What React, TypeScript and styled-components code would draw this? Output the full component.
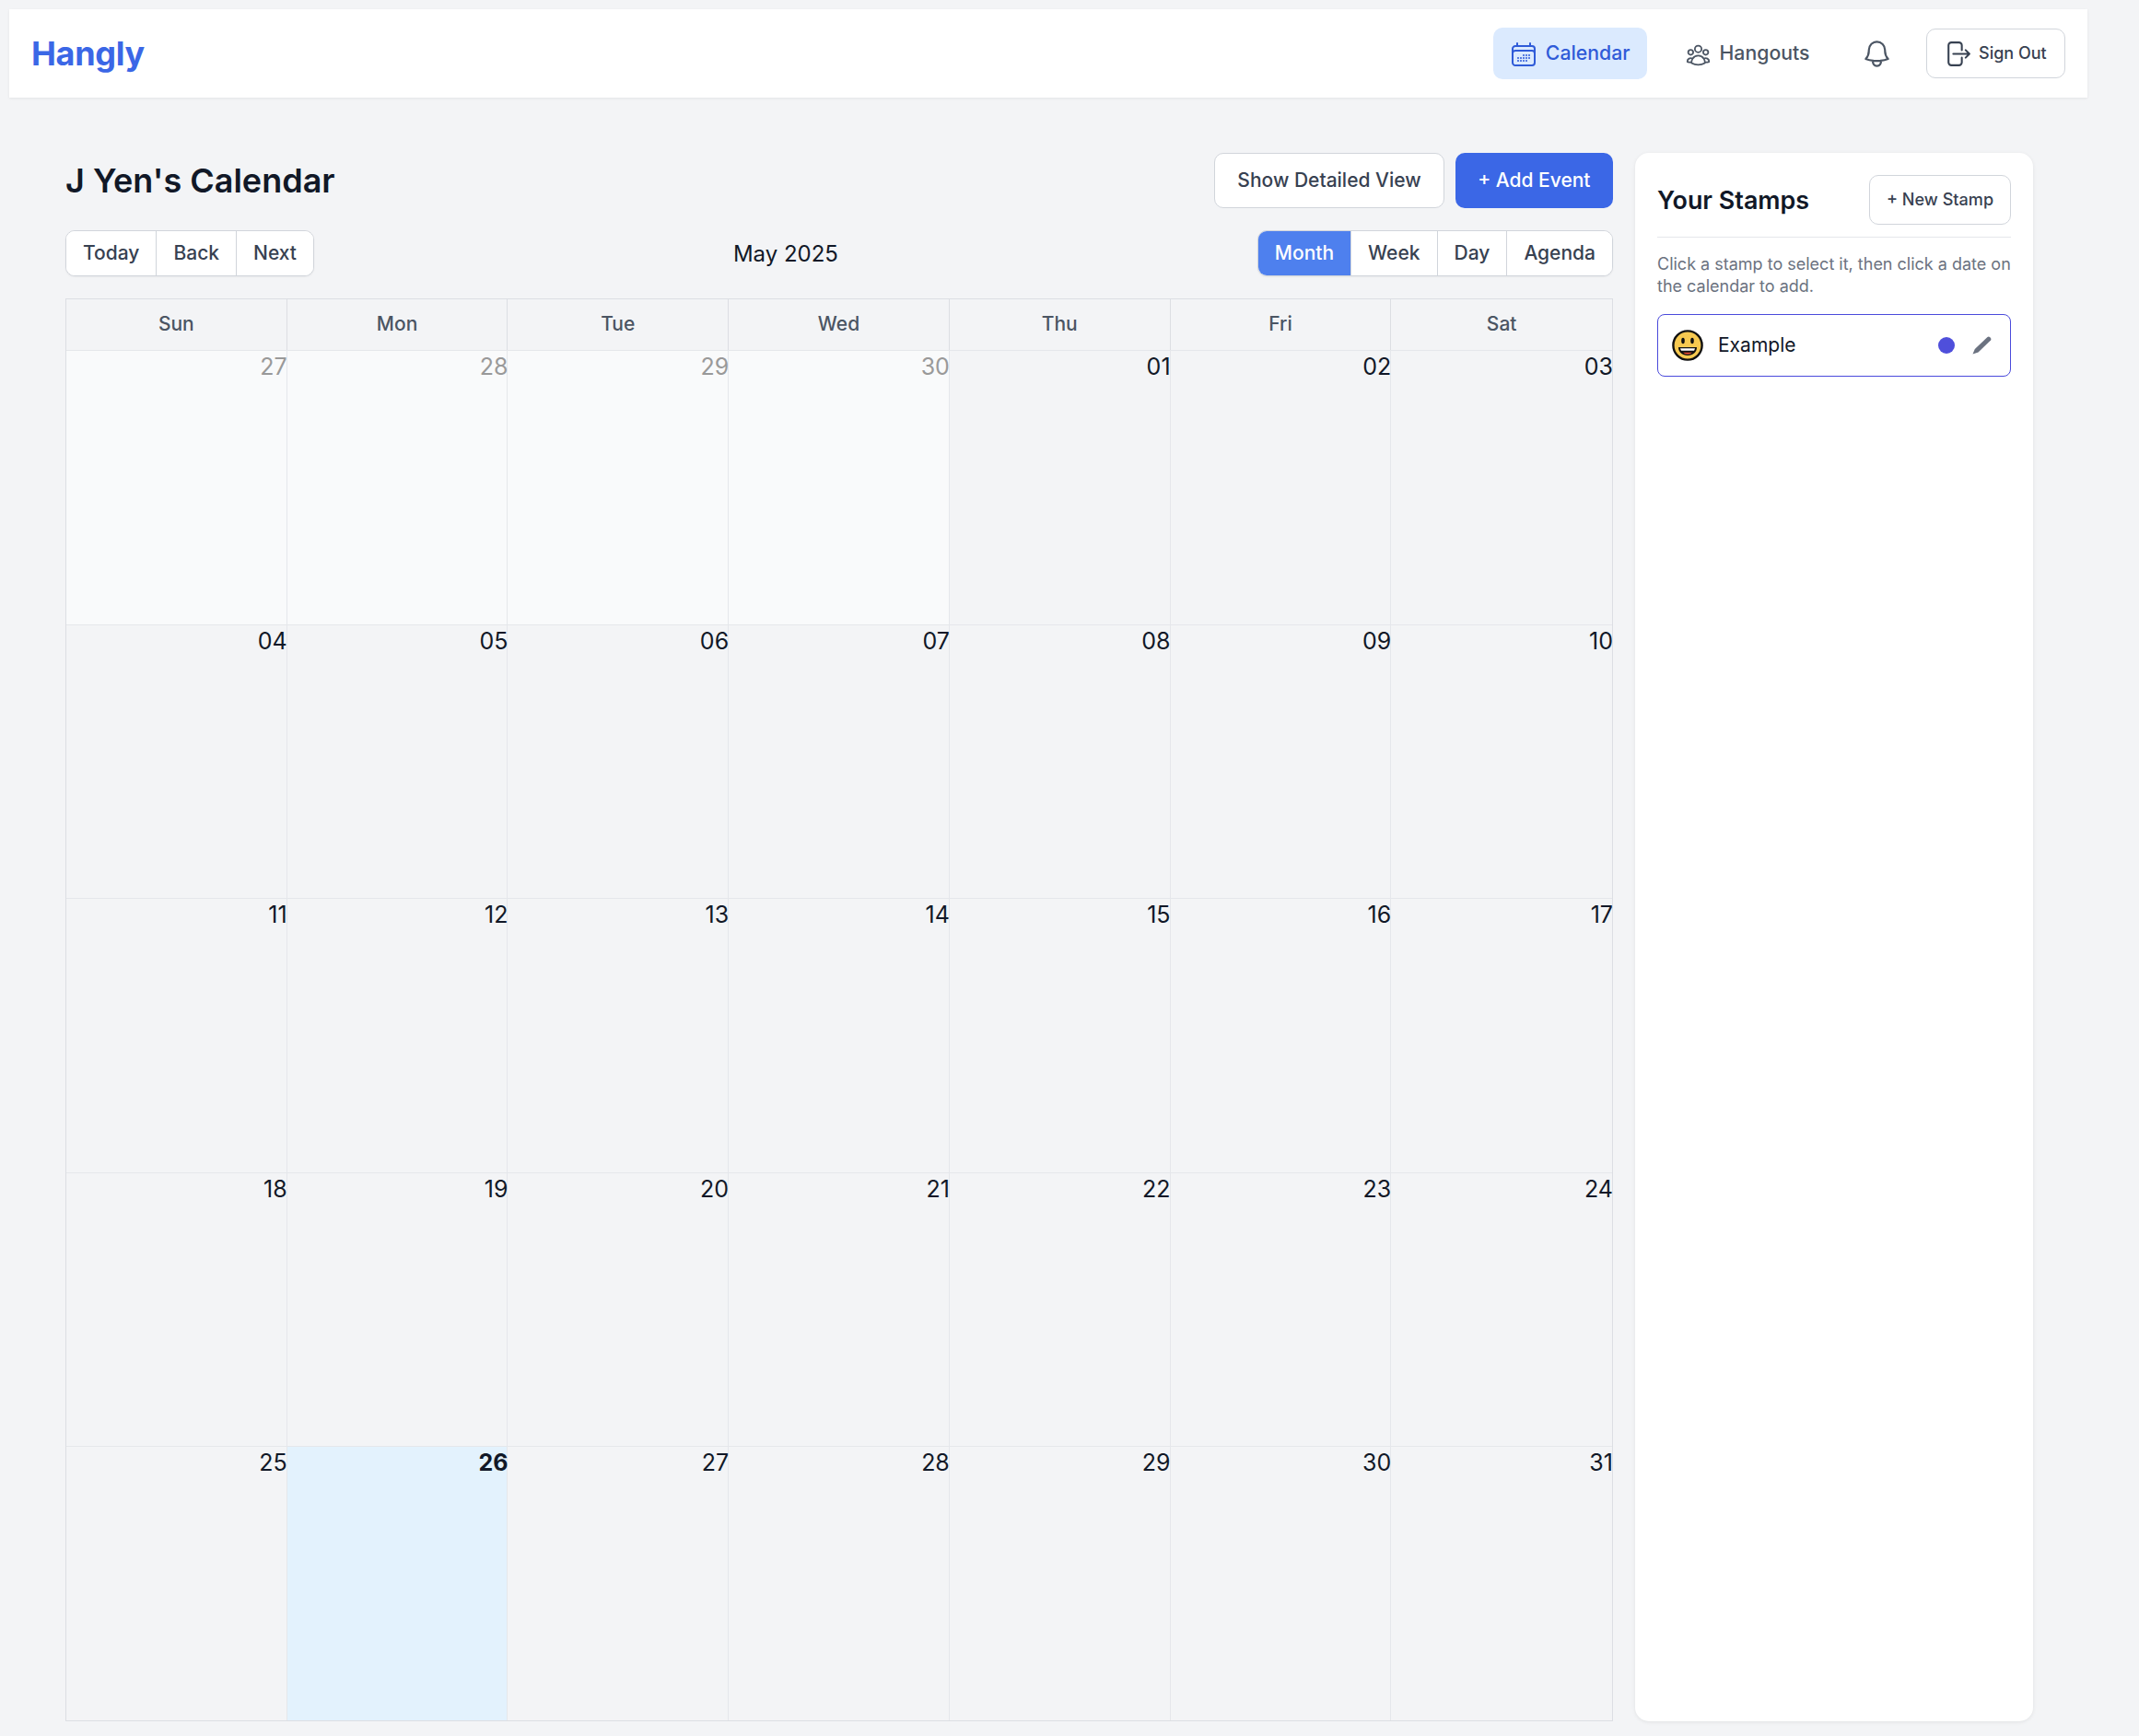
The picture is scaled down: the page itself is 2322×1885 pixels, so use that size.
import React from "react";
import styled, { createGlobalStyle } from "styled-components";
import { HiOutlineCalendarDays, HiOutlineUserGroup, HiOutlineBell } from "react-icons/hi2";

const Global = createGlobalStyle`
  html, body { margin: 0; padding: 0; background: #f3f4f6; }
  body { font-family: Inter, "Noto Sans", sans-serif; color: #111827; }
  * { box-sizing: border-box; }
  button { font-family: inherit; cursor: pointer; }
`;

const Page = styled.div`
  width: 2322px;
  height: 1885px;
  padding: 10px 56px 0 10px;
`;

const Navbar = styled.header`
  height: 96px;
  background: #fff;
  box-shadow: 0 1px 3px rgba(0, 0, 0, 0.07);
  display: flex;
  align-items: center;
  justify-content: space-between;
  padding: 0 24px 0 24px;
`;

const Logo = styled.div`
  font-size: 36px;
  font-weight: 700;
  color: #3b67e6;
  letter-spacing: -0.3px;
`;

const NavRight = styled.nav`
  display: flex;
  align-items: center;
  gap: 24px;
`;

const NavLink = styled.a<{ $active?: boolean }>`
  display: flex;
  align-items: center;
  gap: 8px;
  height: 56px;
  padding: 0 18px 2px 17px;
  border-radius: 10px;
  font-size: 21.25px;
  font-weight: 500;
  color: ${(p) => (p.$active ? "#2f5bd8" : "#4b5563")};
  background: ${(p) => (p.$active ? "#dbeafe" : "transparent")};
`;

const CalendarIcon = styled(HiOutlineCalendarDays)`
  width: 32px;
  height: 32px;
  flex: none;
  margin-top: 4px;
`;

const HangoutsIcon = styled(HiOutlineUserGroup)`
  width: 29px;
  height: 29px;
  flex: none;
  margin: 4px 1px 0 0;
`;

const BellWrap = styled.span`
  display: flex;
  color: #4b5563;
  margin: 0 12.5px 0 13px;
  svg { width: 35px; height: 35px; }
`;

const SignOut = styled.button`
  display: flex;
  align-items: center;
  gap: 7px;
  width: 151px;
  height: 54px;
  padding: 0 0 2px 16px;
  background: #fff;
  border: 1.25px solid #d1d5db;
  border-radius: 10px;
  font-size: 18px;
  font-weight: 500;
  color: #374151;
  svg { width: 33px; height: 33px; flex: none; margin-top: 2px; }
`;

const Main = styled.main`
  display: grid;
  grid-template-columns: 1680px 432px;
  gap: 24px;
  padding: 60px 59px 0 61px;
`;

const CalendarColumn = styled.section`
  display: flex;
  flex-direction: column;
`;

const TitleRow = styled.div`
  display: flex;
  justify-content: space-between;
  align-items: center;
  height: 60px;
`;

const Title = styled.h1`
  margin: 0;
  font-size: 36px;
  font-weight: 600;
  color: #111827;
`;

const Actions = styled.div`
  display: flex;
  gap: 12px;
`;

const ActionButton = styled.button<{ $primary?: boolean }>`
  height: 60px;
  padding: ${(p) => (p.$primary ? "0 24.5px 2px" : "0 24px 2px")};
  border-radius: 10px;
  font-size: 21px;
  font-weight: 500;
  border: ${(p) => (p.$primary ? "none" : "1.25px solid #d1d5db")};
  color: ${(p) => (p.$primary ? "#fff" : "#374151")};
  background: ${(p) => (p.$primary ? "#3b67e6" : "#fff")};
`;

const Toolbar = styled.div`
  display: flex;
  align-items: center;
  justify-content: space-between;
  height: 50px;
  margin-top: 24px;
  margin-bottom: 24px;
`;

const Segmented = styled.div`
  display: flex;
  height: 50px;
  background: #fff;
  border: 1.25px solid #d1d5db;
  border-radius: 10px;
  box-shadow: 0 1px 2px rgba(0, 0, 0, 0.05);
  overflow: hidden;
`;

const Segment = styled.button<{ $active?: boolean }>`
  border: none;
  border-left: 1.25px solid #d1d5db;
  &:first-child { border-left: none; }
  padding: 0 18px 1px;
  font-size: 21px;
  font-weight: 500;
  color: ${(p) => (p.$active ? "#fff" : "#374151")};
  background: ${(p) => (p.$active ? "#4e80ee" : "#fff")};
`;

const MonthLabel = styled.div`
  font-size: 24px;
  font-weight: 400;
  color: #111827;
`;

const Grid = styled.div`
  display: flex;
  flex-direction: column;
  height: 1545px;
  border: 1.5px solid #dcdee3;
`;

const HeadRow = styled.div`
  display: grid;
  grid-template-columns: repeat(7, 1fr);
  height: 55px;
  flex: none;
`;

const Head = styled.div`
  display: flex;
  align-items: center;
  justify-content: center;
  padding-bottom: 2px;
  font-size: 21px;
  font-weight: 500;
  color: #4b5563;
  border-right: 1.25px solid #dcdee3;
  &:last-child { border-right: none; }
`;

const Week = styled.div`
  flex: 1;
  display: grid;
  grid-template-columns: repeat(7, 1fr);
  border-top: 1.25px solid #e5e7eb;
`;

const Day = styled.div<{ $off?: boolean; $today?: boolean }>`
  display: flex;
  justify-content: flex-end;
  align-items: flex-start;
  padding-top: 1px;
  border-right: 1.25px solid #e5e7eb;
  &:last-child { border-right: none; }
  background: ${(p) => (p.$today ? "#e3f2fd" : p.$off ? "#f9fafb" : "transparent")};
  font-size: 25px;
  line-height: 32px;
  font-weight: ${(p) => (p.$today ? 700 : 400)};
  color: ${(p) => (p.$off ? "#999" : "#111827")};
`;

const DayNumber = styled.span`
  margin-right: -1px;
`;

const Card = styled.aside`
  height: 1703px;
  background: #fff;
  border-radius: 15px;
  box-shadow: 0 1px 4px rgba(0, 0, 0, 0.08);
  padding: 24px;
`;

const CardHead = styled.div`
  display: flex;
  align-items: center;
  justify-content: space-between;
  padding-bottom: 13px;
  border-bottom: 1.25px solid #e5e7eb;
`;

const CardTitle = styled.h2`
  margin: 0;
  font-size: 26.9px;
  font-weight: 600;
  color: #111827;
`;

const NewStamp = styled.button`
  height: 54px;
  width: 154px;
  padding: 0 0 2px;
  background: #fff;
  border: 1.25px solid #d1d5db;
  border-radius: 10px;
  font-size: 18.1px;
  font-weight: 500;
  color: #374151;
`;

const Hint = styled.p`
  margin: 17px 0 0;
  font-size: 18px;
  line-height: 24px;
  color: #6b7280;
`;

const StampRow = styled.div`
  display: flex;
  align-items: center;
  height: 68px;
  margin-top: 18px;
  padding: 0 20px 0 15px;
  border: 1.5px solid #4a4adb;
  border-radius: 8px;
`;

const StampName = styled.span`
  flex: 1;
  margin-left: 16px;
  font-size: 21px;
  color: #111827;
  padding-bottom: 1px;
`;

const Dot = styled.span`
  width: 18px;
  height: 18px;
  border-radius: 50%;
  background: #4f4fdb;
  margin-right: 19px;
`;

const Icon = styled.svg`
  display: block;
  flex: none;
`;

const SignOutIcon = () => (
  <svg viewBox="0 0 24 24" fill="none" stroke="currentColor" strokeWidth={1.5} strokeLinecap="round" strokeLinejoin="round">
    <path d="M15.75 9V5.25A2.25 2.25 0 0013.5 3h-6a2.25 2.25 0 00-2.25 2.25v13.5A2.25 2.25 0 007.5 21h6a2.25 2.25 0 002.25-2.25V15m3 0l3-3m0 0l-3-3m3 3H9" />
  </svg>
);

const Emoji = () => (
  <Icon width="34" height="34" viewBox="0 0 34 34">
    <circle cx="17" cy="17" r="15.6" fill="#f7c950" stroke="#111" strokeWidth="2.4" />
    <ellipse cx="12" cy="12" rx="1.800" ry="3.200" fill="#111" />
    <ellipse cx="22" cy="12" rx="1.800" ry="3.200" fill="#111" />
    <path d="M7 19h20c0 5.500-4.300 9-10 9s-10-3.500-10-9z" fill="#111" />
    <path d="M9 20.300h16c-.2 1-.5 1.800-1 2.500h-14c-.5-.7-.8-1.500-1-2.500z" fill="#fff" />
    <path d="M12 24.800h10c-1.400 1.300-3 1.900-5 1.900s-3.600-.6-5-1.900z" fill="#e2492f" />
  </Icon>
);

const Pencil = () => (
  <Icon width="21" height="20" viewBox="0 0 21 20">
    <path d="M0.500 19.500 L2.800 14 L16.500 1 Q17.800 0 19 1 L20 2 Q21 3.200 20 4.400 L6.500 17.500 Z" fill="#6b7280" />
  </Icon>
);

const days = ["Sun", "Mon", "Tue", "Wed", "Thu", "Fri", "Sat"];
const weeks: string[][] = [
  ["27", "28", "29", "30", "01", "02", "03"],
  ["04", "05", "06", "07", "08", "09", "10"],
  ["11", "12", "13", "14", "15", "16", "17"],
  ["18", "19", "20", "21", "22", "23", "24"],
  ["25", "26", "27", "28", "29", "30", "31"],
];

export default function App() {
  return (
    <Page>
      <Global />
      <Navbar>
        <Logo>Hangly</Logo>
        <NavRight>
          <NavLink $active><CalendarIcon />Calendar</NavLink>
          <NavLink><HangoutsIcon />Hangouts</NavLink>
          <BellWrap><HiOutlineBell /></BellWrap>
          <SignOut><SignOutIcon />Sign Out</SignOut>
        </NavRight>
      </Navbar>
      <Main>
        <CalendarColumn>
          <TitleRow>
            <Title>J Yen's Calendar</Title>
            <Actions>
              <ActionButton>Show Detailed View</ActionButton>
              <ActionButton $primary>+ Add Event</ActionButton>
            </Actions>
          </TitleRow>
          <Toolbar>
            <Segmented>
              <Segment>Today</Segment>
              <Segment>Back</Segment>
              <Segment>Next</Segment>
            </Segmented>
            <MonthLabel>May 2025</MonthLabel>
            <Segmented>
              <Segment $active>Month</Segment>
              <Segment>Week</Segment>
              <Segment>Day</Segment>
              <Segment>Agenda</Segment>
            </Segmented>
          </Toolbar>
          <Grid>
            <HeadRow>
              {days.map((d) => <Head key={d}>{d}</Head>)}
            </HeadRow>
            {weeks.map((w, i) => (
              <Week key={i}>
                {w.map((d, j) => (
                  <Day key={j} $off={i === 0 && j < 4} $today={i === 4 && j === 1}>
                    <DayNumber>{d}</DayNumber>
                  </Day>
                ))}
              </Week>
            ))}
          </Grid>
        </CalendarColumn>
        <Card>
          <CardHead>
            <CardTitle>Your Stamps</CardTitle>
            <NewStamp>+ New Stamp</NewStamp>
          </CardHead>
          <Hint>Click a stamp to select it, then click a date on the calendar to add.</Hint>
          <StampRow>
            <Emoji />
            <StampName>Example</StampName>
            <Dot />
            <Pencil />
          </StampRow>
        </Card>
      </Main>
    </Page>
  );
}
